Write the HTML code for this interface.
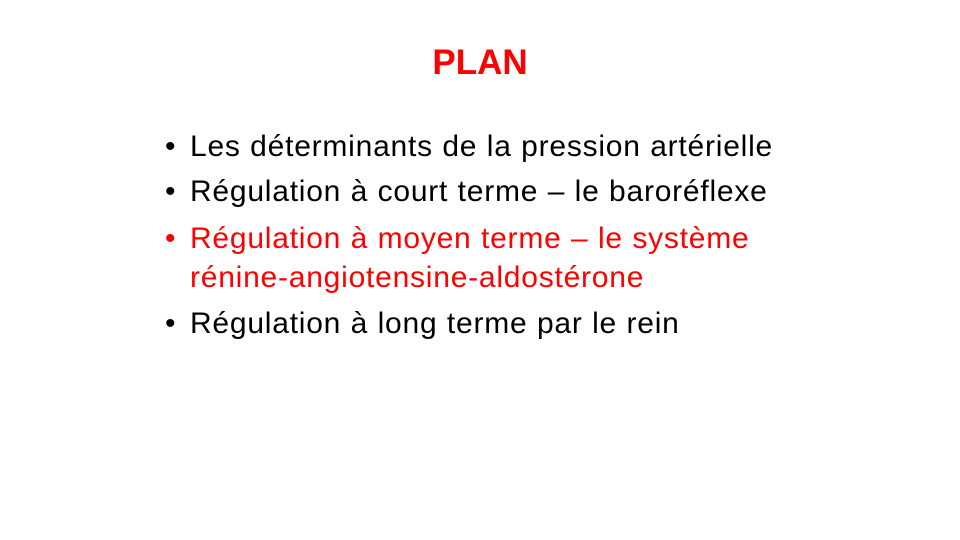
<!DOCTYPE html>
<html><head><meta charset="utf-8"><style>
html,body{margin:0;padding:0;background:#fff;}
body{width:960px;height:540px;position:relative;overflow:hidden;font-family:"Liberation Sans",Arial,sans-serif;}
.t{position:absolute;left:0;width:960px;text-align:center;top:42px;font-size:35px;font-weight:bold;color:#ff0000;line-height:42px;}
.l{position:absolute;left:190px;font-size:30px;line-height:34px;color:#000;white-space:nowrap;letter-spacing:0.77px;word-spacing:0.4px;}
.b:before{content:"•";position:absolute;left:-25px;}
.r{color:#ff0000;}
</style></head><body>
<div class="t">PLAN</div>
<div class="l b" style="top:130px">Les déterminants de la pression artérielle</div>
<div class="l b" style="top:175px">Régulation à court terme – le baroréflexe</div>
<div class="l b r" style="top:222px">Régulation à moyen terme – le système</div>
<div class="l r" style="top:261px;">rénine-angiotensine-aldostérone</div>
<div class="l b" style="top:307px">Régulation à long terme par le rein</div>
</body></html>
